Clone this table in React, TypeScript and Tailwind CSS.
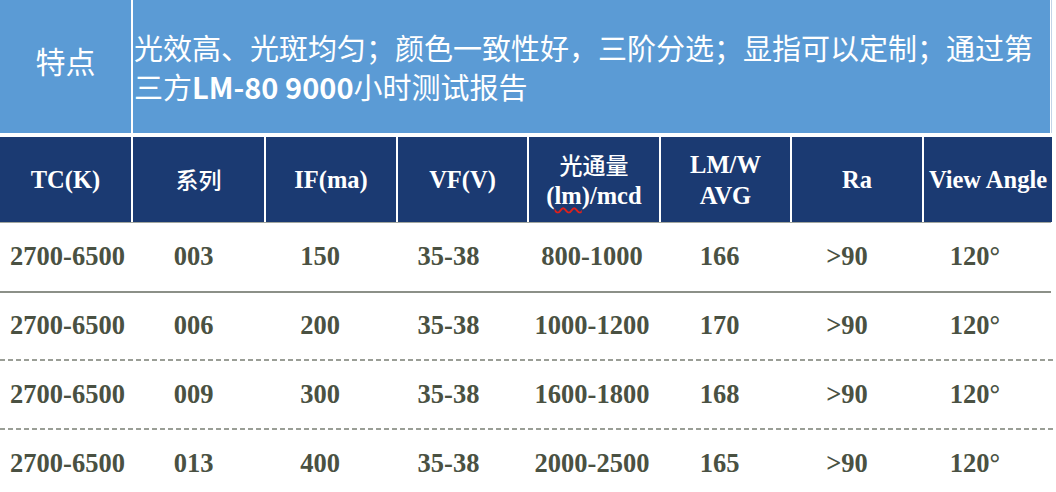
const COLS = "grid grid-cols-[131px_131px_130px_129px_130px_129px_130px_128px] gap-x-[2px]";

const HEAD: (string | string[])[] = [
  "TC(K)",
  "系列",
  "IF(ma)",
  "VF(V)",
  ["光通量", "(lm)/mcd"],
  ["LM/W", "AVG"],
  "Ra",
  "View Angle",
];

// data text sits a bit left of centre in most columns
const PAD = ["pl-[4px]", "pr-[10px]", "pr-[22px]", "pr-[28px]", "pr-[4px]", "pr-[12px]", "pr-[20px]", "pr-[26px]"];

const ROWS = [
  { h: "h-[68px]", cells: ["2700-6500", "003", "150", "35-38", "800-1000", "166", ">90", "120°"] },
  { h: "h-[66px]", cells: ["2700-6500", "006", "200", "35-38", "1000-1200", "170", ">90", "120°"] },
  { h: "h-[67px]", cells: ["2700-6500", "009", "300", "35-38", "1600-1800", "168", ">90", "120°"] },
  { h: "h-[68px]", cells: ["2700-6500", "013", "400", "35-38", "2000-2500", "165", ">90", "120°"] },
];

const CJK = "font-['Noto_Sans_CJK_SC',sans-serif] text-[23px] font-medium";

const Solid = () => <div className="h-[2px] w-[1051px] bg-[#8c9088]" />;
const Dashed = () => (
  <div className="h-[2px] w-full bg-[repeating-linear-gradient(90deg,#9a9e96_0_5px,transparent_5px_8px)]" />
);

export default function App() {
  return (
    <div className="h-[492px] w-[1056px] overflow-hidden bg-white font-['Liberation_Serif','Noto_Sans_CJK_SC',serif]">
      {/* feature row */}
      <div className="flex h-[133px] w-[1052px] gap-x-[2px] border-r border-[#c4d3e6] pr-[1px]">
        <div className="flex w-[131px] items-center justify-center bg-[#5b9bd5] pb-3 font-['Noto_Sans_CJK_SC',sans-serif] text-[30px] text-white">
          特点
        </div>
        <div className="flex flex-1 items-center bg-[#5b9bd5] pl-[1px] font-['Noto_Sans_CJK_SC',sans-serif] text-[29px] leading-[39px] text-white">
          <p>
            光效高、光斑均匀；颜色一致性好，三阶分选；显指可以定制；通过第
            <br />
            三方<span className="font-bold">LM-80 9000</span>小时测试报告
          </p>
        </div>
      </div>

      {/* header row */}
      <div className={`${COLS} mt-[4px] h-[85px] w-[1052px] border-r border-[#c4d3e6] pr-[1px]`}>
        {HEAD.map((h, i) => (
          <div
            key={i}
            className="flex flex-col items-center justify-center bg-[#1b3a72] text-[24.5px] font-bold leading-[31px] text-white"
          >
            {Array.isArray(h) ? (
              h[0] === "光通量" ? (
                <>
                  <span className={CJK}>{h[0]}</span>
                  <span>
                    (<span className="underline decoration-[#e0201b] decoration-wavy decoration-[1.5px] underline-offset-[3px]">lm</span>)/mcd
                  </span>
                </>
              ) : (
                <>
                  <span>{h[0]}</span>
                  <span>{h[1]}</span>
                </>
              )
            ) : (
              <span className={i === 1 ? CJK : ""}>{h}</span>
            )}
          </div>
        ))}
      </div>
      <div className="h-px w-[1051px] bg-[#a3a79f]" />

      {/* data rows */}
      {ROWS.map((r, ri) => (
        <div key={ri}>
          <div className={`${COLS} ${r.h} items-center text-[26.5px] font-bold text-[#4a5142]`}>
            {r.cells.map((c, ci) => (
              <div key={ci} className={`text-center ${PAD[ci]}`}>
                {c}
              </div>
            ))}
          </div>
          {ri === 0 ? <Solid /> : ri < ROWS.length - 1 ? <Dashed /> : null}
        </div>
      ))}
    </div>
  );
}
